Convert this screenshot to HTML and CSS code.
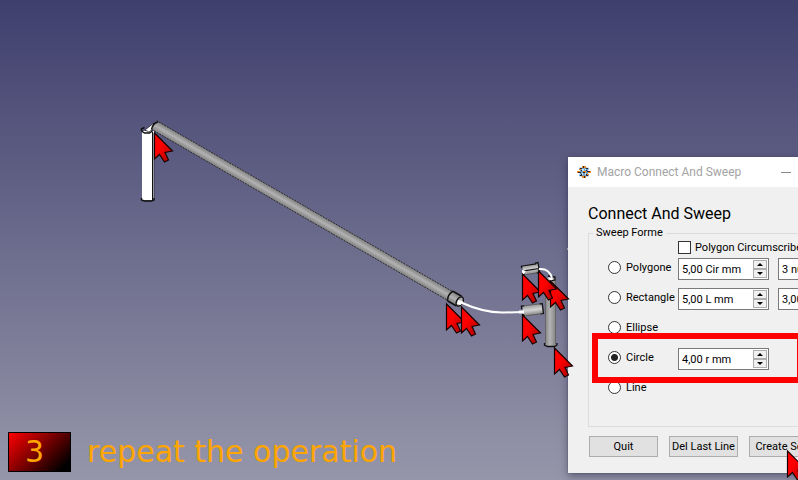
FILE: index.html
```html
<!DOCTYPE html>
<html lang="en">
<head>
<meta charset="utf-8">
<title>Macro Connect And Sweep</title>
<link rel="stylesheet" href="styles.css">
</head>
<body>
<main class="viewport">
  <svg class="drawing" width="798" height="480" viewBox="0 0 798 480" aria-hidden="true">
    <defs>
      <linearGradient id="tube" x1="0" x2="1" y1="0" y2="0">
        <stop offset="0" stop-color="#808080"/><stop offset=".45" stop-color="#b4b4b4"/><stop offset="1" stop-color="#808080"/>
      </linearGradient>
      <linearGradient id="tubeFlat" x1="0" x2="0" y1="0" y2="1">
        <stop offset="0" stop-color="#808080"/><stop offset=".5" stop-color="#b2b2b2"/><stop offset="1" stop-color="#808080"/>
      </linearGradient>
      <linearGradient id="elbow" x1="0" x2="0" y1="0" y2="1">
        <stop offset="0" stop-color="#999"/><stop offset=".5" stop-color="#d2d2d2"/><stop offset="1" stop-color="#888"/>
      </linearGradient>
    </defs>
    <!-- upright white tube -->
    <path d="M142 131h12v69h-12z" fill="#fff"/>
    <path d="M152.500 132v68" stroke="#111"/>
    <path d="M154 133v66" stroke="#334"/>
    <path d="M141.500 198v2l3 1h7l2.500-1v-2M141.500 131v-2l3-1.500M141.500 131l3 2h5l3-2" fill="none" stroke="#111" stroke-width="1.500"/>
    <path d="M145 130l5-4 4-3-1 6-4 3z" fill="#fff" stroke="#111" stroke-width=".7"/>
    <!-- long tube -->
    <g transform="translate(154 125) rotate(30)">
      <rect x="0" y="-5" width="354" height="10" fill="url(#tubeFlat)"/>
      <path d="M0-5h342M0 5h342" stroke="#222" stroke-width=".8" stroke-dasharray="2 1"/>
      <path d="M2-5q-4 4-2 10M342-5.500q-3 5 0 11M342-5.500h10M342 5.500h10" fill="none" stroke="#111" stroke-width="1.500"/>
      <ellipse cx="353" cy="0" rx="3" ry="5" fill="#aaa" stroke="#111" stroke-width="1.500"/>
    </g>
    <path d="M458 300l5 1-2 4-4-1z" fill="#fff"/>
    <path d="M460 302q24 11 44 10.500t19-.5" fill="none" stroke="#fff" stroke-width="2"/>
    <!-- vertical tube and elbows -->
    <rect x="545" y="278" width="11" height="68" fill="url(#tube)"/>
    <path d="M545.500 280v64M555.500 280v64" stroke="#666"/>
    <path d="M544.500 343v2l3 1.500h7l2.500-1.500v-2M548 276l7 1v3l-6 1" fill="none" stroke="#111" stroke-width="1.300"/>
    <g transform="translate(523 270) rotate(-9)">
      <rect y="-4" width="16" height="9" fill="url(#elbow)"/>
      <path d="M-1-2v-2h3M1 5l-2-2M1 1h15M13-5h3v10h-3M2-4h12" fill="none" stroke="#111" stroke-width="1.200"/>
      <path d="M2 5h12" stroke="#555"/>
    </g>
    <path d="M522 270l4 1-2 3h-2z" fill="#fff"/>
    <g transform="translate(523 311) rotate(-7)">
      <rect y="-5" width="20" height="10" fill="url(#elbow)"/>
      <path d="M-1-2v-3h3M1 5l-2-2M17-5h3v10h-3" fill="none" stroke="#111" stroke-width="1.300"/>
      <path d="M2-5h16M2 5h16" stroke="#555" stroke-width=".8"/>
    </g>
    <path d="M519 312h5" stroke="#fff" stroke-width="3"/>
    <path d="M539 269q10-1 13 9" fill="none" stroke="#fff" stroke-width="2"/>
    <path d="M548 277l6 2-4 2z" fill="#fff"/>
    <path d="M567 249h2" stroke="#ddd" stroke-width="2"/>
  </svg>

  <section class="dialog" aria-labelledby="dialog-title">
    <header class="titlebar">
      <svg class="app-icon" width="14" height="14" viewBox="0 0 14 14" aria-hidden="true">
        <path d="M7 2l5 1-1 3 2 1-2 1 1 3-5 1-5-1 1-3-2-1 2-1-1-3z" fill="#6f9fc4"/>
        <path d="M5 1h4v2H5zM0 6h3v2H0zM11 6h3v2h-3zM5 11h4v2H5zM6 6h3v2H6zM2 4h2v1H2zM10 9h2v1h-2z" fill="#ef8b22"/>
        <path d="M3 3h2v1H3zM9 3h2v1H9zM3 10h2v1H3zM9 10h2v1H9zM6 1h1v2H6zM7 11h1v2H7zM1 7h3v1H1zM10 6h3v1h-3zM6 7h2v1H6zM4 5h1v1H4zM9 5h1v1H9zM4 9h1v1H4zM9 9h1v1H9z" fill="#27272d"/>
        <path d="M5 4h2v2H5zM8 8h1v2H8zM8 4h1v1H8zM5 8h1v2H5z" fill="#c5e2f0"/>
      </svg>
      <span class="title" id="dialog-title">Macro Connect And Sweep</span>
      <button class="minimize" type="button" aria-label="Minimize"></button>
    </header>
    <form class="content">
      <h1>Connect And Sweep</h1>
      <fieldset class="shapes">
        <legend>Sweep Forme</legend>
        <label class="check"><input type="checkbox">Polygon Circumscribed</label>
        <div class="row">
          <label class="choice"><input type="radio" name="shape">Polygone</label>
          <div class="spin"><input type="text" value="5,00 Cir mm" aria-label="Polygon size"><span class="steps"><button type="button" class="up" aria-label="Increase"></button><button type="button" class="down" aria-label="Decrease"></button></span></div>
          <div class="spin"><input type="text" value="3 number" aria-label="Polygon sides"></div>
        </div>
        <div class="row">
          <label class="choice"><input type="radio" name="shape">Rectangle</label>
          <div class="spin"><input type="text" value="5,00 L mm" aria-label="Rectangle length"><span class="steps"><button type="button" class="up" aria-label="Increase"></button><button type="button" class="down" aria-label="Decrease"></button></span></div>
          <div class="spin"><input type="text" value="3,00 l mm" aria-label="Rectangle width"></div>
        </div>
        <div class="row">
          <label class="choice"><input type="radio" name="shape">Ellipse</label>
        </div>
        <div class="row">
          <label class="choice"><input type="radio" name="shape" checked>Circle</label>
          <div class="spin"><input type="text" value="4,00 r mm" aria-label="Circle radius"><span class="steps"><button type="button" class="up" aria-label="Increase"></button><button type="button" class="down" aria-label="Decrease"></button></span></div>
          <span class="highlight"></span>
        </div>
        <div class="row">
          <label class="choice"><input type="radio" name="shape">Line</label>
        </div>
      </fieldset>
      <div class="actions">
        <button type="button">Quit</button>
        <button type="button">Del Last Line</button>
        <button type="button">Create Sole</button>
      </div>
    </form>
  </section>

  <div class="caption">
    <span class="step">3</span>
    <span class="message">repeat the operation</span>
  </div>

  <svg class="pointers" width="798" height="480" viewBox="0 0 798 480" aria-hidden="true">
    <defs>
      <linearGradient id="red" x1="0" y1="0" x2="1" y2="1">
        <stop offset=".4" stop-color="#f00"/><stop offset="1" stop-color="#a00000"/>
      </linearGradient>
      <path id="arrow" d="M0 0V26L5 21.500 10 29 14 27 10.500 19.500 18 18Z" fill="url(#red)" stroke="#180000" stroke-width="1.200"/>
    </defs>
    <use href="#arrow" x="154.500" y="133"/>
    <use href="#arrow" x="446.500" y="304"/>
    <use href="#arrow" x="461.500" y="307"/>
    <use href="#arrow" x="522.500" y="274"/>
    <use href="#arrow" x="550.500" y="281"/>
    <use href="#arrow" x="538.500" y="271"/>
    <use href="#arrow" x="522.500" y="315"/>
    <use href="#arrow" x="554.500" y="348"/>
    <use href="#arrow" x="787.500" y="451"/>
  </svg>
</main>
</body>
</html>
```

FILE: styles.css
```css
* {
  box-sizing: border-box;
}

body {
  margin: 0;
  font-family: Roboto, "Noto Sans", sans-serif;
  font-size: 12px;
  color: #000;
}

.viewport {
  position: relative;
  display: flex;
  flex-direction: column;
  justify-content: flex-end;
  min-height: 100vh;
  padding: 8px;
  overflow: hidden;
  background: linear-gradient(#3f3f6e, #9696aa);
}

.drawing,
.pointers {
  position: absolute;
  top: 0;
  left: 0;
}

.pointers {
  pointer-events: none;
}

.dialog {
  position: absolute;
  top: 157px;
  left: 568px;
  width: 330px;
  background: #f0f0f0;
  box-shadow: 0 0 1px #404060, 0 3px 8px rgba(30, 30, 60, 0.5);
}

.titlebar {
  display: flex;
  align-items: center;
  gap: 6px;
  height: 30px;
  padding-left: 9px;
  background: #fff;
  color: #a3a3a3;
}

.title {
  flex: none;
  width: 178px;
  font-size: 12px;
}

.minimize {
  width: 10px;
  height: 1px;
  padding: 0;
  border: 0;
  background: #888;
}

.content {
  padding: 16px 20px;
}

h1 {
  margin: 0;
  font-size: 16px;
  line-height: 22px;
  font-weight: 400;
}

.shapes {
  min-height: 202px;
  margin: 0 0 9px;
  padding: 0;
  border: 1px solid #dcdcdc;
}

legend {
  margin-left: 4px;
  padding: 0 3px;
  font-size: 11px;
  line-height: 16px;
}

.check {
  display: flex;
  align-items: center;
  gap: 4px;
  height: 13px;
  margin-left: 89px;
  font-size: 11px;
  white-space: nowrap;
}

.check input,
.choice input {
  appearance: none;
  flex: none;
  width: 13px;
  height: 13px;
  margin: 0;
  border: 1px solid #333;
  background: #fff;
}

.choice input {
  border-radius: 50%;
}

.choice input:checked {
  background: radial-gradient(circle, #222 3px, #fff 4px);
}

.row {
  position: relative;
  display: grid;
  grid-template-columns: 61px 91px 91px;
  column-gap: 9px;
  align-items: center;
  height: 30px;
  padding-left: 19px;
  font-size: 11px;
}

.choice {
  display: flex;
  align-items: center;
  gap: 5px;
  white-space: nowrap;
  padding-bottom: 4px;
}

.spin {
  display: flex;
  height: 22px;
  border: 1px solid #7a7a7a;
  background: #fff;
}

.spin input {
  width: 100%;
  min-width: 0;
  padding: 1px 0 0 3px;
  border: 0;
  background: none;
  font: inherit;
}

.steps {
  display: flex;
  flex: none;
  flex-direction: column;
  width: 15px;
  padding: 1px 1px 1px 0;
}

.steps button {
  display: flex;
  flex: 1;
  align-items: center;
  justify-content: center;
  padding: 0;
  border: 1px solid #adadad;
  background: #f0f0f0;
}

.steps button::before {
  content: "";
  border: 3px solid transparent;
}

.steps .up::before {
  border-top: 0;
  border-bottom-color: #000;
}

.steps .down::before {
  border-bottom: 0;
  border-top-color: #000;
}

.highlight {
  position: absolute;
  top: -11px;
  left: 3px;
  width: 211px;
  height: 50px;
  border: 6px solid #f00;
  z-index: 1;
  pointer-events: none;
}

.actions {
  display: grid;
  grid-template-columns: repeat(3, 69px);
  gap: 11px;
  padding-left: 1px;
}

.actions button {
  height: 21px;
  padding: 1px 2px 0;
  border: 1px solid #adadad;
  background: #e1e1e1;
  font: inherit;
  font-size: 11px;
  line-height: 16px;
  white-space: nowrap;
}

.caption {
  display: flex;
  align-items: center;
  gap: 16px;
  font-family: "DejaVu Sans", sans-serif;
  font-size: 30px;
  line-height: 38px;
  color: #ffa500;
}

.step {
  width: 63px;
  padding-right: 10px;
  border: 1px solid #000;
  background: linear-gradient(135deg, #f00, #000 90%);
  text-align: center;
}

.caption,
.message {
  position: relative;
  white-space: nowrap;
}
```
